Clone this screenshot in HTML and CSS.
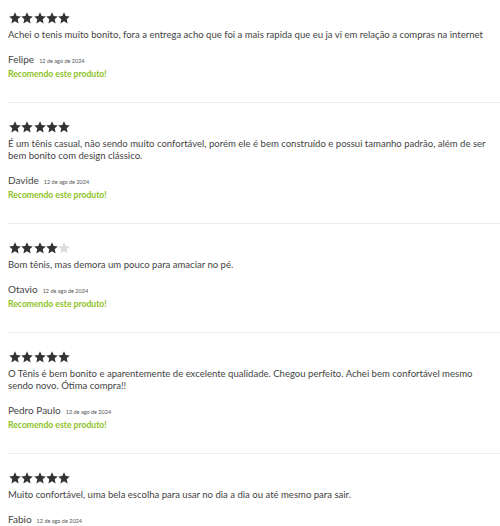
FILE: index.html
```html
<!DOCTYPE html>
<html lang="pt-BR">
<head>
<meta charset="utf-8">
<link rel="stylesheet" href="styles.css">
</head>
<body>
<svg width="0" height="0" class="defs">
  <defs>
    <symbol id="star" viewBox="0 0 12 12">
      <polygon points="6,0.3 7.7,4.1 11.8,4.5 8.7,7.3 9.6,11.5 6,9.3 2.4,11.5 3.3,7.3 0.2,4.5 4.3,4.1"/>
    </symbol>
  </defs>
</svg>
<div class="reviews">
  <div class="review">
    <div class="stars"><svg class="s on"><use href="#star"/></svg><svg class="s on"><use href="#star"/></svg><svg class="s on"><use href="#star"/></svg><svg class="s on"><use href="#star"/></svg><svg class="s on"><use href="#star"/></svg></div>
    <p class="text">Achei o tenis muito bonito, fora a entrega acho que foi a mais rapida que eu ja vi em relação a compras na internet</p>
    <div class="author"><span class="name">Felipe</span><span class="date">12 de ago de 2024</span></div>
    <div class="rec">Recomendo este produto!</div>
  </div>
  <div class="review">
    <div class="stars"><svg class="s on"><use href="#star"/></svg><svg class="s on"><use href="#star"/></svg><svg class="s on"><use href="#star"/></svg><svg class="s on"><use href="#star"/></svg><svg class="s on"><use href="#star"/></svg></div>
    <p class="text">É um tênis casual, não sendo muito confortável, porém ele é bem construído e possui tamanho padrão, além de ser bem bonito com design clássico.</p>
    <div class="author"><span class="name">Davide</span><span class="date">12 de ago de 2024</span></div>
    <div class="rec">Recomendo este produto!</div>
  </div>
  <div class="review">
    <div class="stars"><svg class="s on"><use href="#star"/></svg><svg class="s on"><use href="#star"/></svg><svg class="s on"><use href="#star"/></svg><svg class="s on"><use href="#star"/></svg><svg class="s off"><use href="#star"/></svg></div>
    <p class="text">Bom tênis, mas demora um pouco para amaciar no pé.</p>
    <div class="author"><span class="name">Otavio</span><span class="date">12 de ago de 2024</span></div>
    <div class="rec">Recomendo este produto!</div>
  </div>
  <div class="review">
    <div class="stars"><svg class="s on"><use href="#star"/></svg><svg class="s on"><use href="#star"/></svg><svg class="s on"><use href="#star"/></svg><svg class="s on"><use href="#star"/></svg><svg class="s on"><use href="#star"/></svg></div>
    <p class="text">O Tênis é bem bonito e aparentemente de excelente qualidade. Chegou perfeito. Achei bem confortável mesmo sendo novo. Ótima compra!!</p>
    <div class="author"><span class="name">Pedro Paulo</span><span class="date">12 de ago de 2024</span></div>
    <div class="rec">Recomendo este produto!</div>
  </div>
  <div class="review">
    <div class="stars"><svg class="s on"><use href="#star"/></svg><svg class="s on"><use href="#star"/></svg><svg class="s on"><use href="#star"/></svg><svg class="s on"><use href="#star"/></svg><svg class="s on"><use href="#star"/></svg></div>
    <p class="text">Muito confortável, uma bela escolha para usar no dia a dia ou até mesmo para sair.</p>
    <div class="author"><span class="name">Fabio</span><span class="date">12 de ago de 2024</span></div>
    <div class="rec">Recomendo este produto!</div>
  </div>
</div>
</body>
</html>
```
FILE: styles.css
```css
html, body { margin: 0; padding: 0; background: #fff; }
body { font-family: Lato, "Open Sans", sans-serif; color: #444; overflow: hidden; }
.defs { position: absolute; }
.reviews { padding: 0 0 0 8px; }
.review { padding: 17px 0 22px 0; border-bottom: 1px solid #ececec; }
.review:first-child { padding-top: 11px; }
.stars { display: flex; gap: 0.3px; height: 13px; align-items: center; margin-left: 1px; }
.s { width: 12px; height: 12px; display: block; }
.s.on { fill: #333; }
.s.off { fill: #ddd; }
.text { margin: 5px 0 0 0; font-size: 9.55px; line-height: 12px; }
.author { margin-top: 11px; display: flex; align-items: baseline; gap: 5px; line-height: 14px; }
.name { font-size: 10px; color: #444; }
.date { font-size: 5.5px; color: #555; }
.rec { font-size: 8.6px; line-height: 12px; color: #8dc21f; font-weight: bold; }
```
